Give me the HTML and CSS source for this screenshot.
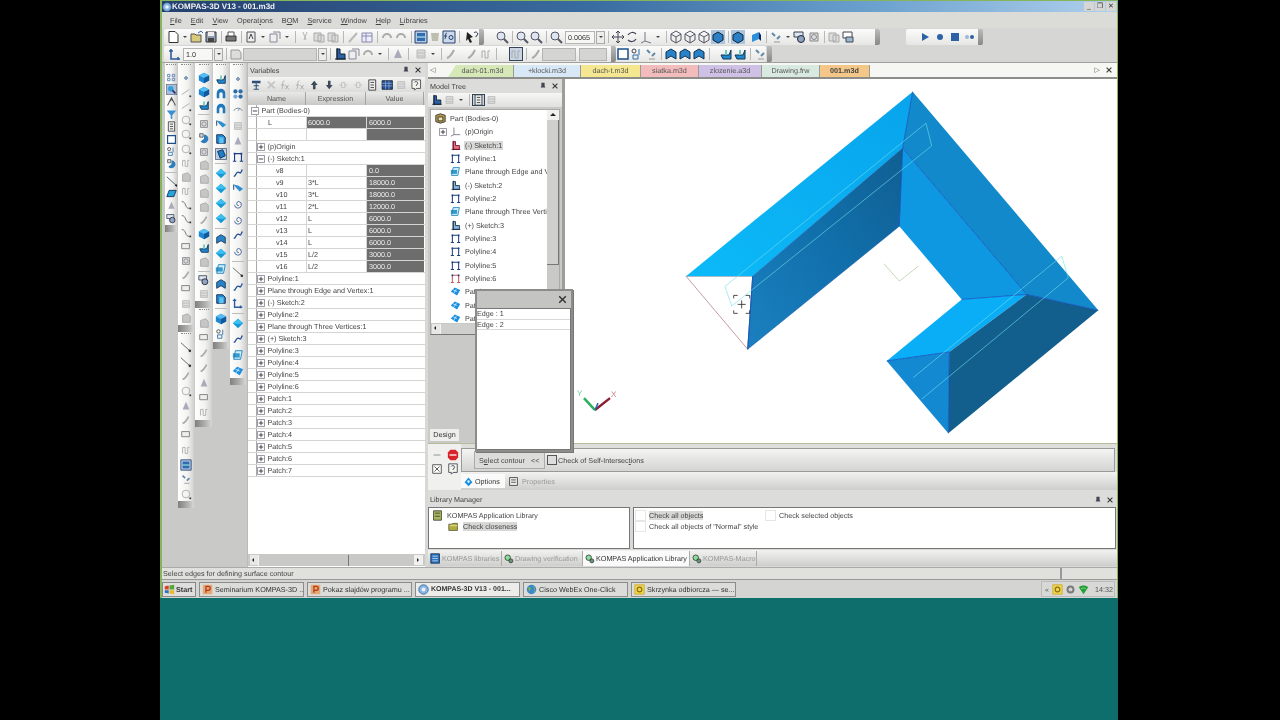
FILE: index.html
```html
<!DOCTYPE html>
<html lang="en">
<head>
<meta charset="utf-8">
<title>KOMPAS-3D V13 - 001.m3d</title>
<link rel="stylesheet" href="styles.css">
</head>
<body>
<svg class="defs" width="0" height="0">
<defs>
<symbol id="doc" viewBox="0 0 14 14"><path d="M3 1.500h6l3 3v8H3z" fill="#fff" stroke="#333"/></symbol>
<symbol id="open" viewBox="0 0 14 14"><path d="M1 4h4l1 1h5v7H1z" fill="#d9c97a" stroke="#555"/><path d="M8 3l3-2 2 2" fill="none" stroke="#2a64b0"/></symbol>
<symbol id="save" viewBox="0 0 14 14"><path d="M2 2h10v10H2z" fill="#8f9fb3" stroke="#333"/><path d="M4 2h6v4H4z" fill="#eee"/><path d="M4 8h6v4H4z" fill="#444"/></symbol>
<symbol id="print" viewBox="0 0 14 14"><path d="M2 6h10v5H2z" fill="#777" stroke="#333"/><path d="M4 2h6v4H4z" fill="#fff" stroke="#555"/></symbol>
<symbol id="page" viewBox="0 0 14 14"><path d="M3 2h8v10H3z" fill="#eee" stroke="#555"/><path d="M5 9l2-5 2 5" fill="none" stroke="#445"/></symbol>
<symbol id="gpage" viewBox="0 0 14 14"><path d="M2 4h7v8H2zM5 2h7v7" fill="#eee" stroke="#889"/></symbol>
<symbol id="scis" viewBox="0 0 14 14"><path d="M5 2l3 8M9 2l-3 8" stroke="#b5b5b5" fill="none"/></symbol>
<symbol id="gdoc" viewBox="0 0 14 14"><path d="M2 3h7v8H2zM6 5h6v7H6z" fill="#ddd" stroke="#aaa"/></symbol>
<symbol id="gbrush" viewBox="0 0 14 14"><path d="M3 12l8-9" stroke="#b8b8b8" stroke-width="2"/></symbol>
<symbol id="table" viewBox="0 0 14 14"><path d="M2 3h10v9H2z" fill="#eef" stroke="#88a"/><path d="M2 6h10M6 3v9" stroke="#88a"/></symbol>
<symbol id="gundo" viewBox="0 0 14 14"><path d="M3 8a4 4 0 0 1 8 0" fill="none" stroke="#aaa" stroke-width="2"/></symbol>
<symbol id="actA" viewBox="0 0 14 14"><path d="M1 1h12v12H1z" fill="#b7c9e2" stroke="#23406e"/><path d="M3 3h8v8H3z" fill="#2f6db3"/><path d="M3 7h8" stroke="#cfe"/></symbol>
<symbol id="shield" viewBox="0 0 14 14"><path d="M3 3h8l-1 8H4z" fill="#bdbdb0"/></symbol>
<symbol id="fx" viewBox="0 0 14 14"><path d="M1 1h12v12H1z" fill="#cdd8ea" stroke="#23406e"/><path d="M5 3c-2 0-1 3-2 6M2 6h3" fill="none" stroke="#23406e"/><circle cx="9" cy="7.500" r="2" fill="none" stroke="#23406e"/></symbol>
<symbol id="help" viewBox="0 0 14 14"><path d="M2 2l6 5-3 1 2 4-2 1-2-4-2 2z" fill="#222"/><path d="M9 3a2 2 0 1 1 2 3v1" fill="none" stroke="#234"/></symbol>
<symbol id="mag" viewBox="0 0 14 14"><circle cx="6" cy="6" r="4" fill="#dde6ee" stroke="#556"/><path d="M9 9l4 4" stroke="#556" stroke-width="2"/></symbol>
<symbol id="move" viewBox="0 0 14 14"><path d="M7 1v12M1 7h12M7 1L5 3M7 1l2 2M7 13l-2-2M7 13l2-2M1 7l2-2M1 7l2 2M13 7l-2-2M13 7l-2 2" fill="none" stroke="#445"/></symbol>
<symbol id="rot" viewBox="0 0 14 14"><path d="M3 5a5 5 0 0 1 8-1M11 9a5 5 0 0 1-8 1" fill="none" stroke="#445" stroke-width="1.200"/></symbol>
<symbol id="axis" viewBox="0 0 14 14"><path d="M6 2v9l6 2M6 11l-4 2" fill="none" stroke="#778"/></symbol>
<symbol id="wire" viewBox="0 0 14 14"><path d="M7 1l5 3v6l-5 3-5-3V4zM2 4l5 3 5-3M7 7v6" fill="none" stroke="#556"/></symbol>
<symbol id="cube" viewBox="0 0 14 14"><path d="M7 1l6 3v6l-6 3-6-3V4z" fill="#1f86d4"/><path d="M1 4l6 3 6-3-6-3z" fill="#55bdf2"/><path d="M7 7l6-3v6l-6 3z" fill="#11589c"/></symbol>
<symbol id="cubeA" viewBox="0 0 14 14"><path d="M0 0h14v14H0z" fill="#aac3df"/><path d="M7 2l5 3v5l-5 3-5-3V5z" fill="#2b7fc4" stroke="#123"/></symbol>
<symbol id="cubeB" viewBox="0 0 14 14"><path d="M3 5l7-3v7l-7 3z" fill="#2b8fdb"/><path d="M10 2l2 3v6l-2-2z" fill="#125"/></symbol>
<symbol id="tool" viewBox="0 0 14 14"><path d="M3 3l3 3M8 9l3-3" stroke="#68a" stroke-width="2"/><path d="M5 12h6" stroke="#999"/></symbol>
<symbol id="gcam" viewBox="0 0 14 14"><path d="M3 3h8v8H3z" fill="#ddd" stroke="#888"/><circle cx="7" cy="7" r="2.500" fill="none" stroke="#889"/></symbol>
<symbol id="dbox" viewBox="0 0 14 14"><path d="M2 2h9v6H2z" fill="#fff" stroke="#445"/><path d="M5 7h7v5H5z" fill="#9bc" stroke="#445"/></symbol>
<symbol id="play" viewBox="0 0 14 14"><path d="M4 3l7 4-7 4z" fill="#2d62a8"/></symbol>
<symbol id="stopc" viewBox="0 0 14 14"><circle cx="7" cy="7" r="3" fill="#2d62a8"/></symbol>
<symbol id="stops" viewBox="0 0 14 14"><path d="M3 3h8v8H3z" fill="#2d62a8"/></symbol>
<symbol id="dots" viewBox="0 0 14 14"><circle cx="4" cy="7" r="2" fill="#a0b6da"/><circle cx="9" cy="7" r="2" fill="#2d62a8"/></symbol>
<symbol id="frame" viewBox="0 0 14 14"><path d="M3 2v10h9M1 4h4M10 10v3" fill="none" stroke="#2d5c9e" stroke-width="1.600"/></symbol>
<symbol id="sketchb" viewBox="0 0 14 14"><path d="M4 2h3v5h5v5H4z" fill="#2d62a8" stroke="#123"/><path d="M2 12h11M4 13V1" stroke="#123"/></symbol>
<symbol id="gsk" viewBox="0 0 14 14"><path d="M2 3h8l2 3v6H2z" fill="#ddd" stroke="#999"/></symbol>
<symbol id="gq" viewBox="0 0 14 14"><path d="M3 11c3-1 5-4 7-8" fill="none" stroke="#aaa" stroke-width="2"/></symbol>
<symbol id="gl" viewBox="0 0 14 14"><path d="M2 10L11 4" stroke="#aaa"/><path d="M11 11h2v2h-2z" fill="#333"/></symbol>
<symbol id="gc" viewBox="0 0 14 14"><circle cx="7" cy="7" r="4.500" fill="none" stroke="#aaa"/><path d="M11 11h2v2h-2z" fill="#333"/></symbol>
<symbol id="dl" viewBox="0 0 14 14"><path d="M1 2l10 9" stroke="#555"/><circle cx="11.500" cy="11.500" r="1.500" fill="#333"/></symbol>
<symbol id="dcurve" viewBox="0 0 14 14"><path d="M2 3c6 0 3 8 9 8" fill="none" stroke="#666"/><path d="M11 10h2v2h-2z" fill="#333"/></symbol>
<symbol id="grect" viewBox="0 0 14 14"><path d="M2 3h9v6H2z" fill="#eee" stroke="#777"/></symbol>
<symbol id="gblk" viewBox="0 0 14 14"><path d="M3 4l6-2 3 3v7l-9 0z" fill="#c6c6c6" stroke="#aaa"/></symbol>
<symbol id="gcurl" viewBox="0 0 14 14"><path d="M3 11V4h3v7h3V4h2" fill="none" stroke="#aaa"/></symbol>
<symbol id="grid" viewBox="0 0 14 14"><path d="M2 3h3v3H2zM8 3h3v3H8zM2 8h3v3H2zM8 8h3v3H8z" fill="none" stroke="#4b77ad"/></symbol>
<symbol id="findA" viewBox="0 0 14 14"><path d="M0 0h14v14H0z" fill="#a8bfd8" stroke="#445"/><circle cx="6" cy="6" r="3.500" fill="#39a0e0"/><path d="M8 8l4 4" stroke="#226" stroke-width="2"/></symbol>
<symbol id="chev" viewBox="0 0 14 14"><path d="M2 12l5-10 5 10M4 8l3-4 3 4" fill="none" stroke="#555" stroke-width="1.300"/></symbol>
<symbol id="funnel" viewBox="0 0 14 14"><path d="M1 2h12L8 8v5L6 12V8z" fill="#3b8fd0"/></symbol>
<symbol id="pdoc" viewBox="0 0 14 14"><path d="M3 1h8v12H3z" fill="#eee" stroke="#333"/><path d="M5 4h4M5 7h4M5 10h4" stroke="#333"/></symbol>
<symbol id="fram" viewBox="0 0 14 14"><path d="M2 2h10v10H2z" fill="#fff" stroke="#1d4f8c" stroke-width="1.500"/></symbol>
<symbol id="gears" viewBox="0 0 14 14"><circle cx="4" cy="4" r="2" fill="none" stroke="#444"/><path d="M3 8h5v4H3zM9 2v6" fill="none" stroke="#2b6ea8"/></symbol>
<symbol id="pie" viewBox="0 0 14 14"><path d="M7 3a5 5 0 1 1-4 8l4-3z" fill="#2e7dbd"/><path d="M2 2h4v4H2z" fill="#cfd8e5" stroke="#555"/></symbol>
<symbol id="dline" viewBox="0 0 14 14"><path d="M1 1l11 10" stroke="#245"/><path d="M12 11l2 2" stroke="#111" stroke-width="2"/></symbol>
<symbol id="para" viewBox="0 0 14 14"><path d="M4 3h9l-3 8H1z" fill="#26a2dd" stroke="#124"/></symbol>
<symbol id="gtri" viewBox="0 0 14 14"><path d="M7 2l4 9H3z" fill="#aab"/></symbol>
<symbol id="mixg" viewBox="0 0 14 14"><path d="M1 2h9v5H1z" fill="#dfe6ef" stroke="#345"/><circle cx="8" cy="9" r="3.500" fill="#8ea4c2" stroke="#223"/></symbol>
<symbol id="dot" viewBox="0 0 14 14"><circle cx="7" cy="7" r="1.500" fill="none" stroke="#24507f"/></symbol>
<symbol id="dotg" viewBox="0 0 14 14"><circle cx="4" cy="4" r="2.500" fill="#2d6fa8"/><circle cx="10" cy="4" r="2.500" fill="#2d6fa8"/><circle cx="4" cy="10" r="2.500" fill="#7ba6d4"/><circle cx="10" cy="10" r="2.500" fill="#2d6fa8"/></symbol>
<symbol id="arc" viewBox="0 0 14 14"><path d="M2 8a5.500 5.500 0 0 1 10 0" fill="none" stroke="#6a7f96"/><path d="M7 8l2-3" stroke="#6a7f96"/></symbol>
<symbol id="gstack" viewBox="0 0 14 14"><path d="M3 3h8v8H3zM3 6h8M3 9h8" fill="#ddd" stroke="#bbb"/></symbol>
<symbol id="poly" viewBox="0 0 14 14"><path d="M3 12V3h8v9M1 12h4M9 12h4" fill="none" stroke="#1e3c82" stroke-width="1.300"/><path d="M2 2h2v2H2zM10 2h2v2h-2z" fill="#1e3c82"/></symbol>
<symbol id="polyr" viewBox="0 0 14 14"><path d="M3 12V3h8v9M1 12h4M9 12h4" fill="none" stroke="#c45a5a" stroke-width="1.300"/><path d="M2 2h2v2H2zM10 2h2v2h-2z" fill="#1e3c82"/></symbol>
<symbol id="zig" viewBox="0 0 14 14"><path d="M2 11c3 0 2-5 5-5s2 4 5-3" fill="none" stroke="#1e4c92" stroke-width="1.500"/></symbol>
<symbol id="blues" viewBox="0 0 14 14"><path d="M2 3l5 1 6 4-4 3-4-4z" fill="#2b8fd2"/><path d="M2 3v6" stroke="#124"/></symbol>
<symbol id="spir" viewBox="0 0 14 14"><path d="M3 8a4 4 0 1 0 5-4 2.500 2.500 0 1 0 0 5" fill="none" stroke="#3a5f95"/></symbol>
<symbol id="patch" viewBox="0 0 14 14"><path d="M7 1l6 5-6 6-6-6z" fill="#159ad8"/><path d="M7 1l6 5-6 1-6-1z" fill="#3dc0ef"/></symbol>
<symbol id="patchA" viewBox="0 0 14 14"><path d="M.500.500h13v13H.500z" fill="#bcd0e4" stroke="#567"/><path d="M3 4l6-2 3 7-6 3z" fill="#1c7fc9" stroke="#124"/></symbol>
<symbol id="shellA" viewBox="0 0 14 14"><path d="M2 2h7l3 3v7H2z" fill="#1f8ad3" stroke="#124"/><path d="M5 5h5v7H5z" fill="#5fc2f3"/></symbol>
<symbol id="arch" viewBox="0 0 14 14"><path d="M2 12V6a5 5 0 0 1 10 0v6H9V7a2 2 0 0 0-4 0v5z" fill="#1e78bb"/></symbol>
<symbol id="fold" viewBox="0 0 14 14"><path d="M2 12V5l5-3 5 3v7l-5-3z" fill="#2882c8" stroke="#135"/></symbol>
<symbol id="rev" viewBox="0 0 14 14"><path d="M2 8h8l2-5v9H4z" fill="#1e89cf" stroke="#135"/><path d="M6 3h2v5H6z" fill="#6cb"/></symbol>
<symbol id="plane" viewBox="0 0 14 14"><path d="M4 2h8l-2 10H2z" fill="#cfeeff" stroke="#137ab5"/><path d="M1 5h8v5H1z" fill="#0f85ba" opacity=".800"/></symbol>
<symbol id="sk-r" viewBox="0 0 14 14"><path d="M4 2h3v5h5v5H4z" fill="#e8707a" stroke="#602"/><path d="M2 12h11M4 13V1" stroke="#602"/></symbol>
<symbol id="sk-b" viewBox="0 0 14 14"><path d="M4 2h3v5h5v5H4z" fill="#7fb4e8" stroke="#123"/><path d="M2 12h11M4 13V1" stroke="#123"/></symbol>
<symbol id="tpatch" viewBox="0 0 14 14"><path d="M1 7l5-5 7 3-4 7z" fill="#1a8ee0"/><path d="M4 5l5 2M5 9l3-5" stroke="#cfeeff"/></symbol>
<symbol id="orig" viewBox="0 0 14 14"><path d="M5 2v9h8M5 11l-4 2" fill="none" stroke="#667"/></symbol>
<symbol id="part" viewBox="0 0 14 14"><path d="M1 3l6-2 6 2v8l-6 2-6-2z" fill="#b89d4a" stroke="#222"/><path d="M4 5h6v5H4z" fill="#e9e2b8" stroke="#222"/></symbol>
<symbol id="book" viewBox="0 0 14 14"><path d="M2 1h10v12H2z" fill="#a9b65c" stroke="#333"/><path d="M4 4h6M4 8h6" stroke="#333"/></symbol>
<symbol id="folder" viewBox="0 0 14 14"><path d="M1 4h4l1-1h6v9H1z" fill="#b2ad3a" stroke="#554"/><path d="M2 6h10" stroke="#ecea9e"/></symbol>
<symbol id="libb" viewBox="0 0 14 14"><path d="M1 1h11v12H1z" fill="#2a76c2" stroke="#124"/><path d="M3 4h7M3 7h7M3 10h7" stroke="#cde"/></symbol>
<symbol id="gearg" viewBox="0 0 14 14"><circle cx="6" cy="6" r="3.500" fill="#8d9" stroke="#333"/><circle cx="10" cy="10" r="2.500" fill="#697" stroke="#333"/></symbol>
<symbol id="props" viewBox="0 0 14 14"><path d="M2 2h10v10H2z" fill="#eee" stroke="#333"/><path d="M4 5h6M4 8h6" stroke="#333"/></symbol>
<symbol id="opt" viewBox="0 0 14 14"><path d="M2 8l5-6 5 6-5 5z" fill="#1c8fe0"/><circle cx="7" cy="7" r="1.500" fill="#dff"/></symbol>
<symbol id="stop" viewBox="0 0 14 14"><path d="M4 1h6l3 3v6l-3 3H4l-3-3V4z" fill="#d9232a"/><path d="M3 7h8" stroke="#fff" stroke-width="1.500"/></symbol>
<symbol id="zoomp" viewBox="0 0 14 14"><path d="M2 2h10v10H2z" fill="#fff" stroke="#444"/><path d="M4 4l6 6M10 4l-6 6" stroke="#444"/></symbol>
<symbol id="qm" viewBox="0 0 14 14"><path d="M2 1h10v10H7l-2 2v-2H2z" fill="#f4f4ea" stroke="#445"/><path d="M5 4a2 2 0 1 1 2 3v1" fill="none" stroke="#235"/></symbol>
<symbol id="ppt" viewBox="0 0 14 14"><path d="M1 1h12v12H1z" fill="#e4a877"/><path d="M5 11V3h3a2 2 0 0 1 0 5H5" fill="none" stroke="#b33a12" stroke-width="1.600"/></symbol>
<symbol id="globe" viewBox="0 0 14 14"><circle cx="7" cy="7" r="6" fill="#3d86d0"/><path d="M3 4c3-1 4 2 2 4s-2 3-1 4" fill="#7cbb3e"/><path d="M9 2c2 2 3 6 1 9" fill="none" stroke="#7cbb3e"/></symbol>
<symbol id="komp" viewBox="0 0 14 14"><circle cx="7" cy="7" r="6" fill="#8ab6e0" stroke="#2b5e96"/><circle cx="7" cy="7" r="2.500" fill="#eef"/></symbol>
<symbol id="mail" viewBox="0 0 14 14"><path d="M1 1h12v12H1z" fill="#f1d44c" stroke="#c6a92a"/><circle cx="7" cy="7" r="3" fill="none" stroke="#8b6f12" stroke-width="1.400"/></symbol>
<symbol id="win" viewBox="0 0 14 14"><path d="M1 3l5-1v5H1z" fill="#d9402a"/><path d="M7 2l6-1v6H7z" fill="#5aa53a"/><path d="M1 8h5v4l-5-1z" fill="#2d6fc4"/><path d="M7 8h6v5l-6-1z" fill="#e9b92c"/></symbol>
<symbol id="shieldt" viewBox="0 0 14 14"><circle cx="7" cy="7" r="5" fill="#7a7a7a"/><circle cx="7" cy="7" r="2.500" fill="#d0d0d0"/></symbol>
<symbol id="wifi" viewBox="0 0 14 14"><path d="M1 4c3-3 9-3 12 0l-6 9z" fill="#25a038"/><path d="M4 6c2-1 4-1 6 0" stroke="#9fe0a8" fill="none"/></symbol>
<symbol id="pin" viewBox="0 0 10 10"><path d="M3 1h4v4l1 2H2l1-2zM5 7v3" fill="#445"/></symbol>
<symbol id="cross" viewBox="0 0 10 10"><path d="M2 2l6 6M8 2l-6 6" stroke="#333" stroke-width="1.300"/></symbol>
<symbol id="plus" viewBox="0 0 9 9"><path d="M.500.500h8v8h-8z" fill="#fff" stroke="#889"/><path d="M2 4.500h5M4.500 2v5" stroke="#333"/></symbol>
<symbol id="minus" viewBox="0 0 9 9"><path d="M.500.500h8v8h-8z" fill="#fff" stroke="#889"/><path d="M2 4.500h5" stroke="#333"/></symbol>
<symbol id="tlines" viewBox="0 0 14 14"><path d="M2 2h10v3H2z" fill="#2c4f78"/><path d="M7 5v7M4 12h6M4 8h6" stroke="#2c4f78" stroke-width="1.200"/></symbol>
<symbol id="gx" viewBox="0 0 14 14"><path d="M3 3l8 8M11 3l-8 8" stroke="#c4c4c4" stroke-width="2"/></symbol>
<symbol id="gfx" viewBox="0 0 14 14"><path d="M6 2c-3 0-1 6-3 10M2 7h4M7 7l4 5M11 7l-4 5" fill="none" stroke="#aaa"/></symbol>
<symbol id="up" viewBox="0 0 14 14"><path d="M7 2l4 5H8.500v5h-3V7H3z" fill="#3e4a5c"/></symbol>
<symbol id="down" viewBox="0 0 14 14"><path d="M7 12l4-5H8.500V2h-3v5H3z" fill="#3e4a5c"/></symbol>
<symbol id="glink" viewBox="0 0 14 14"><path d="M2 7h4M8 7h4M5 4h4v6H5z" fill="none" stroke="#c0c0c0"/></symbol>
<symbol id="bluetable" viewBox="0 0 14 14"><path d="M1 2h12v10H1z" fill="#244f96" stroke="#123"/><path d="M1 5h12M1 8h12M5 2v10M9 2v10" stroke="#a9c0e4" stroke-width=".7"/></symbol>
</defs>
</svg>

<div class="stage">
<div class="window">

<header class="titlebar">
  <svg class="ic11"><use href="#komp"/></svg>
  <span class="title-text">KOMPAS-3D V13 - 001.m3d</span>
  <span class="caption-btns"><span class="cbtn">_</span><span class="cbtn">❐</span><span class="cbtn">✕</span></span>
</header>

<nav class="menubar">
  <span class="mi"><u>F</u>ile</span><span class="mi"><u>E</u>dit</span><span class="mi"><u>V</u>iew</span><span class="mi">Operat<u>i</u>ons</span><span class="mi">B<u>O</u>M</span><span class="mi"><u>S</u>ervice</span><span class="mi"><u>W</u>indow</span><span class="mi"><u>H</u>elp</span><span class="mi"><u>L</u>ibraries</span>
</nav>

<div class="tbrow tbrow1">
  <div class="tb tb-main">
    <svg class="ti"><use href="#doc"/></svg><i class="dd"></i><svg class="ti"><use href="#open"/></svg><svg class="ti"><use href="#save"/></svg><i class="sp"></i>
    <svg class="ti"><use href="#print"/></svg><i class="sp"></i><svg class="ti"><use href="#page"/></svg><i class="dd"></i><svg class="ti"><use href="#gpage"/></svg><i class="dd"></i><i class="sp"></i>
    <svg class="ti"><use href="#scis"/></svg><svg class="ti"><use href="#gdoc"/></svg><svg class="ti"><use href="#gdoc"/></svg><i class="sp"></i><svg class="ti"><use href="#gbrush"/></svg><svg class="ti"><use href="#table"/></svg><i class="sp"></i>
    <svg class="ti"><use href="#gundo"/></svg><svg class="ti"><use href="#gundo"/></svg><i class="sp"></i><svg class="ti"><use href="#actA"/></svg><svg class="ti"><use href="#shield"/></svg><svg class="ti"><use href="#fx"/></svg><i class="sp"></i><i class="gap3"></i><svg class="ti"><use href="#help"/></svg><i class="grip"></i><i class="gap11"></i>
    <svg class="ti"><use href="#mag"/></svg><i class="sp"></i><svg class="ti"><use href="#mag"/></svg><svg class="ti"><use href="#mag"/></svg><i class="sp"></i><svg class="ti"><use href="#mag"/></svg>
    <span class="input inp-zoom">0.0065</span><span class="combo-btn"></span><i class="sp"></i>
    <svg class="ti"><use href="#move"/></svg><svg class="ti"><use href="#rot"/></svg><svg class="ti"><use href="#axis"/></svg><i class="dd"></i><i class="sp"></i>
    <svg class="ti"><use href="#wire"/></svg><svg class="ti"><use href="#wire"/></svg><svg class="ti"><use href="#wire"/></svg><svg class="ti"><use href="#cubeA"/></svg><i class="sp"></i><svg class="ti"><use href="#cubeA"/></svg><svg class="ti tiw"><use href="#cubeB"/></svg><i class="sp"></i>
    <svg class="ti"><use href="#tool"/></svg><i class="dd"></i><svg class="ti"><use href="#mixg"/></svg><svg class="ti"><use href="#gcam"/></svg><i class="sp"></i><svg class="ti"><use href="#gdoc"/></svg><svg class="ti"><use href="#dbox"/></svg><i class="grip grip-end"></i>
  </div>
  <div class="tb tb-run">
    <svg class="ti"><use href="#play"/></svg><svg class="ti"><use href="#stopc"/></svg><svg class="ti"><use href="#stops"/></svg><svg class="ti"><use href="#dots"/></svg><i class="grip grip-end"></i>
  </div>
</div>

<div class="tbrow tbrow2">
  <div class="tb tb-sec">
    <svg class="ti"><use href="#frame"/></svg><span class="input inp-one">1.0</span><span class="combo-btn"></span><i class="sp"></i><svg class="ti"><use href="#gsk"/></svg><span class="input inp-long"></span><span class="combo-btn"></span><i class="sp"></i>
    <svg class="ti"><use href="#sketchb"/></svg><svg class="ti"><use href="#gpage"/></svg><svg class="ti"><use href="#gundo"/></svg><i class="dd"></i><i class="sp"></i><svg class="ti"><use href="#gtri"/></svg><i class="sp"></i><i class="gap3"></i><svg class="ti"><use href="#gstack"/></svg><i class="dd"></i><i class="sp"></i><svg class="ti"><use href="#gq"/></svg><i class="gap7"></i><svg class="ti"><use href="#gq"/></svg><svg class="ti"><use href="#gcurl"/></svg><i class="sp"></i><i class="gap10"></i><svg class="ti ti-act"><use href="#gcurl"/></svg><i class="sp"></i><svg class="ti"><use href="#gq"/></svg>
    <span class="input inp-a"></span><span class="input inp-b"></span><i class="grip"></i>
    <svg class="ti"><use href="#fram"/></svg><svg class="ti"><use href="#gears"/></svg><svg class="ti"><use href="#tool"/></svg><i class="sp"></i><svg class="ti"><use href="#fold"/></svg><svg class="ti"><use href="#fold"/></svg><svg class="ti"><use href="#fold"/></svg><i class="sp"></i><i class="gap7"></i><svg class="ti"><use href="#rev"/></svg><svg class="ti"><use href="#rev"/></svg><i class="sp"></i><svg class="ti"><use href="#tool"/></svg><i class="grip grip-end"></i>
  </div>
</div>

<div class="main">

<aside class="dock">
  <div class="col col1">
    <div class="strip">
      <i class="gripdots"></i>
      <svg class="si"><use href="#grid"/></svg><svg class="si"><use href="#findA"/></svg><svg class="si"><use href="#chev"/></svg><svg class="si"><use href="#funnel"/></svg><svg class="si"><use href="#pdoc"/></svg><svg class="si"><use href="#fram"/></svg><svg class="si"><use href="#gears"/></svg><svg class="si"><use href="#pie"/></svg><i class="hsep"></i><svg class="si"><use href="#dline"/></svg><svg class="si"><use href="#para"/></svg><svg class="si"><use href="#gtri"/></svg><svg class="si"><use href="#mixg"/></svg>
    </div>
    <i class="handle"></i>
  </div>
  <div class="col col2">
    <div class="strip">
      <i class="gripdots"></i>
      <svg class="si"><use href="#dot"/></svg><svg class="si"><use href="#gl"/></svg><svg class="si"><use href="#gl"/></svg><svg class="si"><use href="#gc"/></svg><svg class="si"><use href="#gc"/></svg><svg class="si"><use href="#gc"/></svg><svg class="si"><use href="#gcurl"/></svg><svg class="si"><use href="#gblk"/></svg><svg class="si"><use href="#gcurl"/></svg><svg class="si"><use href="#dcurve"/></svg><svg class="si"><use href="#dcurve"/></svg><svg class="si"><use href="#dcurve"/></svg><svg class="si"><use href="#grect"/></svg><svg class="si"><use href="#gcam"/></svg><svg class="si"><use href="#gq"/></svg><svg class="si"><use href="#grect"/></svg><svg class="si"><use href="#gstack"/></svg><svg class="si"><use href="#gblk"/></svg>
    </div>
    <i class="handle"></i>
    <div class="strip strip-b">
      <i class="gripdots"></i>
      <svg class="si"><use href="#dl"/></svg><svg class="si"><use href="#dl"/></svg><svg class="si"><use href="#gq"/></svg><svg class="si"><use href="#gc"/></svg><svg class="si"><use href="#gtri"/></svg><svg class="si"><use href="#gq"/></svg><svg class="si"><use href="#grect"/></svg><svg class="si"><use href="#gcurl"/></svg><svg class="si"><use href="#actA"/></svg><svg class="si"><use href="#tool"/></svg><svg class="si"><use href="#gc"/></svg>
    </div>
    <i class="handle"></i>
  </div>
  <div class="col col3">
    <div class="strip">
      <i class="gripdots"></i>
      <svg class="si"><use href="#cube"/></svg><svg class="si"><use href="#cube"/></svg><svg class="si"><use href="#rev"/></svg><i class="hsep"></i><svg class="si"><use href="#gcam"/></svg><svg class="si"><use href="#pie"/></svg><svg class="si"><use href="#gcam"/></svg><svg class="si"><use href="#gblk"/></svg><svg class="si"><use href="#gblk"/></svg><svg class="si"><use href="#gblk"/></svg><svg class="si"><use href="#gblk"/></svg><svg class="si"><use href="#gq"/></svg><svg class="si"><use href="#cube"/></svg><svg class="si"><use href="#rev"/></svg><svg class="si"><use href="#gblk"/></svg><i class="hsep"></i><svg class="si"><use href="#mixg"/></svg><svg class="si"><use href="#gstack"/></svg>
    </div>
    <i class="handle"></i>
    <div class="strip strip-b">
      <i class="gripdots"></i>
      <svg class="si"><use href="#gblk"/></svg><svg class="si"><use href="#grect"/></svg><svg class="si"><use href="#gq"/></svg><svg class="si"><use href="#gq"/></svg><svg class="si"><use href="#gtri"/></svg><svg class="si"><use href="#grect"/></svg><svg class="si"><use href="#gcurl"/></svg>
    </div>
    <i class="handle"></i>
  </div>
  <div class="col col4">
    <div class="strip">
      <i class="gripdots"></i>
      <svg class="si"><use href="#rev"/></svg><svg class="si"><use href="#arch"/></svg><svg class="si"><use href="#arch"/></svg><svg class="si"><use href="#blues"/></svg><svg class="si"><use href="#shellA"/></svg><svg class="si"><use href="#patchA"/></svg><i class="hsep"></i><svg class="si"><use href="#patch"/></svg><svg class="si"><use href="#patch"/></svg><svg class="si"><use href="#patch"/></svg><svg class="si"><use href="#patch"/></svg><i class="hsep"></i><svg class="si"><use href="#fold"/></svg><svg class="si"><use href="#patch"/></svg><svg class="si"><use href="#plane"/></svg><svg class="si"><use href="#fold"/></svg><svg class="si"><use href="#shellA"/></svg><i class="hsep"></i><svg class="si"><use href="#cube"/></svg><svg class="si"><use href="#gears"/></svg>
    </div>
    <i class="handle"></i>
  </div>
  <div class="col col5">
    <div class="strip">
      <i class="gripdots"></i>
      <svg class="si"><use href="#dot"/></svg><svg class="si"><use href="#dotg"/></svg><svg class="si"><use href="#arc"/></svg><svg class="si"><use href="#gstack"/></svg><svg class="si"><use href="#gtri"/></svg><svg class="si"><use href="#poly"/></svg><svg class="si"><use href="#zig"/></svg><svg class="si"><use href="#blues"/></svg><svg class="si"><use href="#spir"/></svg><svg class="si"><use href="#spir"/></svg><svg class="si"><use href="#zig"/></svg><svg class="si"><use href="#spir"/></svg><i class="hsep"></i><svg class="si"><use href="#dl"/></svg><svg class="si"><use href="#zig"/></svg><svg class="si"><use href="#frame"/></svg><i class="hsep"></i><svg class="si"><use href="#patch"/></svg><svg class="si"><use href="#zig"/></svg><svg class="si"><use href="#plane"/></svg><svg class="si"><use href="#tpatch"/></svg>
    </div>
    <i class="handle"></i>
  </div>
</aside>

<section class="vars">
  <div class="panel-title"><span>Variables</span><span class="pt-btns"><svg class="pb"><use href="#pin"/></svg><svg class="pb"><use href="#cross"/></svg></span></div>
  <div class="vtools">
    <svg class="ti"><use href="#tlines"/></svg><svg class="ti"><use href="#gx"/></svg><svg class="ti"><use href="#gfx"/></svg><svg class="ti"><use href="#gfx"/></svg><svg class="ti"><use href="#up"/></svg><svg class="ti"><use href="#down"/></svg><svg class="ti"><use href="#glink"/></svg><svg class="ti"><use href="#glink"/></svg><svg class="ti"><use href="#pdoc"/></svg><svg class="ti"><use href="#bluetable"/></svg><svg class="ti"><use href="#gstack"/></svg><svg class="ti"><use href="#qm"/></svg>
  </div>
  <div class="vhead"><span>Name</span><span>Expression</span><span>Value</span></div>
  <div class="vbody">
    <div class="vr"><span class="vn l0"><svg class="ex"><use href="#minus"/></svg>Part (Bodies-0)</span></div>
    <div class="vr"><span class="vn var1">L</span><span class="ve dark">6000.0</span><span class="vv dark">6000.0</span></div>
    <div class="vr"><span class="vn"></span><span class="ve"></span><span class="vv dark"></span></div>
    <div class="vr"><span class="vn l1"><svg class="ex"><use href="#plus"/></svg>(p)Origin</span></div>
    <div class="vr"><span class="vn l1"><svg class="ex"><use href="#minus"/></svg>(-) Sketch:1</span></div>
    <div class="vr"><span class="vn var2">v8</span><span class="ve"></span><span class="vv dark">0.0</span></div>
    <div class="vr"><span class="vn var2">v9</span><span class="ve">3*L</span><span class="vv dark">18000.0</span></div>
    <div class="vr"><span class="vn var2">v10</span><span class="ve">3*L</span><span class="vv dark">18000.0</span></div>
    <div class="vr"><span class="vn var2">v11</span><span class="ve">2*L</span><span class="vv dark">12000.0</span></div>
    <div class="vr"><span class="vn var2">v12</span><span class="ve">L</span><span class="vv dark">6000.0</span></div>
    <div class="vr"><span class="vn var2">v13</span><span class="ve">L</span><span class="vv dark">6000.0</span></div>
    <div class="vr"><span class="vn var2">v14</span><span class="ve">L</span><span class="vv dark">6000.0</span></div>
    <div class="vr"><span class="vn var2">v15</span><span class="ve">L/2</span><span class="vv dark">3000.0</span></div>
    <div class="vr"><span class="vn var2">v16</span><span class="ve">L/2</span><span class="vv dark">3000.0</span></div>
    <div class="vr"><span class="vn l1"><svg class="ex"><use href="#plus"/></svg>Polyline:1</span></div>
    <div class="vr"><span class="vn l1 wide"><svg class="ex"><use href="#plus"/></svg>Plane through Edge and Vertex:1</span></div>
    <div class="vr"><span class="vn l1"><svg class="ex"><use href="#plus"/></svg>(-) Sketch:2</span></div>
    <div class="vr"><span class="vn l1"><svg class="ex"><use href="#plus"/></svg>Polyline:2</span></div>
    <div class="vr"><span class="vn l1 wide"><svg class="ex"><use href="#plus"/></svg>Plane through Three Vertices:1</span></div>
    <div class="vr"><span class="vn l1"><svg class="ex"><use href="#plus"/></svg>(+) Sketch:3</span></div>
    <div class="vr"><span class="vn l1"><svg class="ex"><use href="#plus"/></svg>Polyline:3</span></div>
    <div class="vr"><span class="vn l1"><svg class="ex"><use href="#plus"/></svg>Polyline:4</span></div>
    <div class="vr"><span class="vn l1"><svg class="ex"><use href="#plus"/></svg>Polyline:5</span></div>
    <div class="vr"><span class="vn l1"><svg class="ex"><use href="#plus"/></svg>Polyline:6</span></div>
    <div class="vr"><span class="vn l1"><svg class="ex"><use href="#plus"/></svg>Patch:1</span></div>
    <div class="vr"><span class="vn l1"><svg class="ex"><use href="#plus"/></svg>Patch:2</span></div>
    <div class="vr"><span class="vn l1"><svg class="ex"><use href="#plus"/></svg>Patch:3</span></div>
    <div class="vr"><span class="vn l1"><svg class="ex"><use href="#plus"/></svg>Patch:4</span></div>
    <div class="vr"><span class="vn l1"><svg class="ex"><use href="#plus"/></svg>Patch:5</span></div>
    <div class="vr"><span class="vn l1"><svg class="ex"><use href="#plus"/></svg>Patch:6</span></div>
    <div class="vr"><span class="vn l1"><svg class="ex"><use href="#plus"/></svg>Patch:7</span></div>
  </div>
  <div class="hscroll"><span class="arrow-l"></span><span class="thumb"></span><span class="arrow-r"></span></div>
</section>

<section class="right">
  <div class="doctabs">
    <span class="tab-nav">◁</span>
    <span class="dtab t1">dach-01.m3d</span><span class="dtab t2">+klocki.m3d</span><span class="dtab t3">dach-t.m3d</span><span class="dtab t4">siatka.m3d</span><span class="dtab t5">zlozenie.a3d</span><span class="dtab t6">Drawing.frw</span><span class="dtab t7">001.m3d</span>
    <span class="tab-end"><span class="tab-arrow">▷</span><svg class="pb"><use href="#cross"/></svg></span>
  </div>
  <div class="upper">
    <div class="tree-panel">
      <div class="panel-title pt-tree"><span>Model Tree</span><span class="pt-btns"><svg class="pb"><use href="#pin"/></svg><svg class="pb"><use href="#cross"/></svg></span></div>
      <div class="ttools"><svg class="ti"><use href="#sketchb"/></svg><svg class="ti"><use href="#gstack"/></svg><i class="dd"></i><i class="sp"></i><svg class="ti ti-act"><use href="#pdoc"/></svg><svg class="ti"><use href="#gstack"/></svg></div>
      <div class="tree-box">
        <div class="tree-main">
          <div class="tree-list">
            <div class="tr tr0"><svg class="tic"><use href="#part"/></svg><span>Part (Bodies-0)</span></div>
            <div class="tr"><svg class="ex exa"><use href="#plus"/></svg><svg class="tic"><use href="#orig"/></svg><span>(p)Origin</span></div>
            <div class="tr"><svg class="tic"><use href="#sk-r"/></svg><span class="sel">(-) Sketch:1</span></div>
            <div class="tr"><svg class="tic"><use href="#poly"/></svg><span>Polyline:1</span></div>
            <div class="tr"><svg class="tic"><use href="#plane"/></svg><span>Plane through Edge and Vertex:1</span></div>
            <div class="tr"><svg class="tic"><use href="#sk-b"/></svg><span>(-) Sketch:2</span></div>
            <div class="tr"><svg class="tic"><use href="#poly"/></svg><span>Polyline:2</span></div>
            <div class="tr"><svg class="tic"><use href="#plane"/></svg><span>Plane through Three Vertices:1</span></div>
            <div class="tr"><svg class="tic"><use href="#sk-b"/></svg><span>(+) Sketch:3</span></div>
            <div class="tr"><svg class="tic"><use href="#poly"/></svg><span>Polyline:3</span></div>
            <div class="tr"><svg class="tic"><use href="#poly"/></svg><span>Polyline:4</span></div>
            <div class="tr"><svg class="tic"><use href="#poly"/></svg><span>Polyline:5</span></div>
            <div class="tr"><svg class="tic"><use href="#polyr"/></svg><span>Polyline:6</span></div>
            <div class="tr"><svg class="tic"><use href="#tpatch"/></svg><span>Patch:1</span></div>
            <div class="tr"><svg class="tic"><use href="#tpatch"/></svg><span>Patch:2</span></div>
            <div class="tr"><svg class="tic"><use href="#tpatch"/></svg><span>Patch:3</span></div>
          </div>
          <div class="vscroll"><span class="va"></span><span class="vthumb"></span></div>
        </div>
        <div class="tree-hs"><span class="arrow-l"></span><span class="ths-thumb"></span></div>
      </div>
      <div class="tree-rest"></div>
      <div class="tree-tabs"><span class="design-tab">Design</span></div>
    </div>
    <div class="viewport">
      <svg class="model" viewBox="565 79 552 365" preserveAspectRatio="none">
        <defs>
          <linearGradient id="gTop" x1="0" y1="1" x2="1" y2="0"><stop offset="0" stop-color="#0cbaf8"/><stop offset="1" stop-color="#08a4ec"/></linearGradient>
          <linearGradient id="gIn" x1="0" y1="1" x2="1" y2="0"><stop offset="0" stop-color="#1b80c0"/><stop offset=".5" stop-color="#1170ac"/><stop offset="1" stop-color="#105f92"/></linearGradient>
        </defs>
        <path d="M686 276.700L752.700 276.700L747.700 350Z" fill="#fff" stroke="#a8707c" stroke-width=".7"/>
        <path d="M912.700 91.700L686 276.700L752.700 276.700L902.700 148.300Z" fill="url(#gTop)"/>
        <path d="M752.700 276.700L902.700 148.300L899.300 226.700L747.700 350Z" fill="url(#gIn)" stroke="#1058b0" stroke-width=".5"/>
        <path d="M912.700 91.700L1098.300 311L1026.700 295L902.700 148.300Z" fill="#1189ca"/>
        <path d="M902.700 148.300L1026.700 295L961.700 300L899.300 226.700Z" fill="#0f98e2"/>
        <path d="M961.700 300L1026.700 295L949.300 352.700L886.700 361.700Z" fill="#0aaef6"/>
        <path d="M1026.700 295L1098.300 311L948.300 434.300L949.300 352.700Z" fill="#125e8c"/>
        <path d="M886.700 361.700L949.300 352.700L948.300 434.300Z" fill="#1389d2"/>
        <path d="M902.700 148.300L1026.700 295L961.700 300M1026.700 295L1098.300 311M886.700 361.700L949.300 352.700L948.300 434.300M902.700 148.300L912.700 91.700M902.700 148.300L899.300 226.700M752.700 276.700L747.700 350" fill="none" stroke="#0f4fc0" stroke-width=".8"/>
        <path d="M725 287L926 123.300L931.700 146L731.700 306.700ZM913.300 378.300L1061.700 256.700L1068.300 278.300L921.700 400" fill="none" stroke="#6fe0ec" stroke-width=".6"/>
        <path d="M884 264.300L899.300 281.700L918.300 266.700" fill="none" stroke="#c6dab4"/>
        <path d="M733.700 299v-3h4M745.700 296h4v3M733.700 311v3h4M745.700 314h4v-3M741.700 301v8M737.700 305h8" fill="none" stroke="#222" stroke-width=".8"/>
        <path d="M595 411L610 399" stroke-width="2.500" fill="none" stroke="#8c1d33"/>
        <path d="M595 411L584 399" stroke-width="2.500" stroke="#2cb05c"/>
        <path d="M595 411L598 404" stroke-width="1.500" stroke="#2468b8"/>
        <text class="axt axy" x="577" y="397">Y</text>
        <text class="axt axx" x="611" y="398">X</text>
      </svg>
    </div>
    <div class="edge-dialog">
      <div class="ed-title"><svg class="ed-x"><use href="#cross"/></svg></div>
      <div class="ed-list"><div class="ed-row">Edge : 1</div><div class="ed-row">Edge : 2</div></div>
    </div>
  </div>

  <div class="pm">
    <div class="pm-left"><svg class="pi pi-dash" viewBox="0 0 14 14"><path d="M3 7h8" stroke="#bbb" stroke-width="2"/></svg><svg class="pi"><use href="#stop"/></svg><svg class="pi"><use href="#zoomp"/></svg><svg class="pi"><use href="#qm"/></svg></div>
    <div class="pm-right">
      <div class="pm-field"><span class="pm-btn">S<u>e</u>lect contour&nbsp;&nbsp;&nbsp;&lt;&lt;</span><span class="checkbox"></span><span class="pm-check">Check of Self-Intersec<u>t</u>ions</span></div>
      <div class="pm-tabs"><span class="ptab act"><svg class="tic"><use href="#opt"/></svg>Options</span><span class="ptab dim"><svg class="tic"><use href="#props"/></svg>Properties</span></div>
    </div>
  </div>

  <div class="lib">
    <div class="panel-title pt-lib"><span>Library Manager</span><span class="pt-btns"><svg class="pb"><use href="#pin"/></svg><svg class="pb"><use href="#cross"/></svg></span></div>
    <div class="lib-boxes">
      <div class="lib-tree">
        <div class="lt"><svg class="tic"><use href="#book"/></svg>KOMPAS Application Library</div>
        <div class="lt lt2"><svg class="tic"><use href="#folder"/></svg><span class="sel">Check closeness</span></div>
      </div>
      <div class="lib-list">
        <div class="ll-col"><div class="ll"><span class="sq"></span><span class="sel">Check all objects</span></div><div class="ll"><span class="sq"></span>Check all objects of "Normal" style</div></div>
        <div class="ll-col"><div class="ll"><span class="sq"></span>Check selected objects</div></div>
      </div>
    </div>
    <div class="lib-tabs">
      <span class="ltab l-a dim"><svg class="tic"><use href="#libb"/></svg>KOMPAS libraries</span><span class="ltab l-b dim"><svg class="tic"><use href="#gearg"/></svg>Drawing verification</span><span class="ltab l-c act"><svg class="tic"><use href="#gearg"/></svg>KOMPAS Application Library</span><span class="ltab l-d dim"><svg class="tic"><use href="#gearg"/></svg>KOMPAS-Macro</span>
    </div>
  </div>
</section>
</div>

<div class="status"><span class="st-text">Select edges for defining surface contour</span><span class="st-cell"></span></div>

<footer class="taskbar">
  <span class="start"><svg class="tic"><use href="#win"/></svg>Start</span>
  <span class="task"><svg class="tic"><use href="#ppt"/></svg>Seminarium KOMPAS-3D ...</span>
  <span class="task"><svg class="tic"><use href="#ppt"/></svg>Pokaz slajdów programu ...</span>
  <span class="task task-act"><svg class="tic"><use href="#komp"/></svg>KOMPAS-3D V13 - 001...</span>
  <span class="task"><svg class="tic"><use href="#globe"/></svg>Cisco WebEx One-Click</span>
  <span class="task"><svg class="tic"><use href="#mail"/></svg>Skrzynka odbiorcza — se...</span>
  <span class="tray"><span class="tray-l">«</span><svg class="tic"><use href="#mail"/></svg><svg class="tic"><use href="#shieldt"/></svg><svg class="tic"><use href="#wifi"/></svg><span class="clock">14:32</span></span>
</footer>

</div>
</div>
</body>
</html>
```
FILE: styles.css
```css
* { box-sizing: border-box; }
html, body { margin: 0; height: 720px; overflow: hidden; }
body {
  background: #000;
  font-family: "Liberation Sans", Arial, sans-serif;
  font-size: 7.200px;
  color: #333;
  text-rendering: geometricPrecision;
}
.defs { position: absolute; }
.stage { margin-left: 160px; width: 958px; height: 720px; background: #0d6e6c; }
.window {
  height: 598px;
  display: flex;
  flex-direction: column;
  background: #d2d2d0;
  border-left: 2px solid #86b55c;
  border-right: 1px solid #86b55c;
  border-top: 1px solid #86b55c;
  filter: blur(.45px);
}
i { display: block; flex: none; }

/* Title */
.titlebar {
  height: 11px;
  flex: none;
  display: flex;
  align-items: center;
  background: linear-gradient(90deg, #24406e 0%, #3a6ca0 45%, #6da2cf 75%, #b0d0ec 100%);
  color: #f2f2f2;
}
.ic11 { width: 10px; height: 10px; }
.title-text { font-weight: 700; font-size: 8px; }
.caption-btns { margin-left: auto; display: flex; gap: 1px; padding-right: 1px; }
.cbtn {
  width: 10px; height: 9px; background: #d6d6d4; color: #333;
  font-size: 7px; line-height: 9px; text-align: center;
}

/* Menu */
.menubar {
  height: 16px; flex: none;
  display: flex; align-items: center;
  padding-left: 8px; gap: 9px;
  background: #dbdbd8;
  color: #444;
  font-size: 7.300px;
}

/* Toolbars */
.tbrow { flex: none; display: flex; background: #d6d6d4; padding-left: 2px; }
.tbrow1 { height: 18px; align-items: center; }
.tbrow2 { height: 17px; align-items: center; border-bottom: 1px solid #a0a09c; }
.tb {
  height: 16px; display: flex; align-items: center;
  background: linear-gradient(#fbfbfb, #e6e6e4);
  border-radius: 2px;
}
.tb-main { width: 716px; padding-left: 2px; flex: none; }
.tb-run { width: 74px; margin-left: 26px; padding-left: 12px; gap: 1px; flex: none; }
.tb-sec { width: 602px; padding-left: 4px; flex: none; }
.ti { width: 14px; height: 14px; flex: none; }
.tiw { margin-left: 4px; }
.ti-act { background: #c8d4e4; outline: 1px solid #345; outline-offset: -1px; }
.sp { width: 1px; height: 12px; background: #b8b8b6; margin: 0 2.500px; }
.dd {
  width: 4px; height: 2px; margin: 0 3px;
  border-left: 2px solid transparent; border-right: 2px solid transparent; border-top: 2px solid #444;
}
.grip { width: 5px; height: 16px; background: linear-gradient(#bbb, #888); border-radius: 0 2px 2px 0; }
.grip-end { margin-left: auto; }
.gap11 { width: 11px; }
.gap10 { width: 10px; }
.gap7 { width: 7px; }
.gap3 { width: 3px; }
.input {
  display: block; flex: none; height: 13px; background: #f7f7f5; border: 1px solid #b4b4b2;
  font-size: 7.200px; line-height: 11px; padding-left: 2px;
}
.inp-zoom { width: 30px; margin-left: 2px; }
.inp-one { width: 30px; margin-left: 1px; }
.inp-long { width: 74px; background: #d4d4d2; }
.inp-a { width: 34px; background: #d4d4d2; margin-left: -1px; }
.inp-b { width: 28px; background: #d4d4d2; margin: 0 4px 0 3px; }
.combo-btn { width: 9px; height: 13px; background: #ececea; border: 1px solid #aaa; flex: none; margin-left: 1px; position: relative; }
.combo-btn::after {
  content: ""; position: absolute; left: 1.500px; top: 4px;
  border-left: 2px solid transparent; border-right: 2px solid transparent; border-top: 2px solid #444;
}

/* Main */
.main { flex: 1; min-height: 0; display: flex; }

/* Left dock */
.dock { width: 85px; flex: none; display: flex; background: #c9c9c7; padding-left: 3px; gap: 1px; align-items: flex-start; }
.col { display: flex; flex-direction: column; align-items: stretch; }
.col1 { width: 12px; }
.col2 { width: 16px; --m: 1.050px; }
.col3 { width: 17px; --m: .875px; }
.col4 { width: 16px; --m: 1.530px; }
.col5 { width: 16px; --m: 1.840px; }
.col2 .strip-b { --m: 1.350px; }
.col3 .strip-b { --m: 1.430px; }
.strip {
  display: flex; flex-direction: column; align-items: center;
  background: linear-gradient(90deg, #ffffff, #f2f2f0 60%, #d0d0ce);
}
.si { width: 12px; height: 12px; flex: none; margin: var(--m) 0; display: block; }
.col1 .si { width: 11px; height: 11px; margin: .700px 0; }
.gripdots { width: 10px; height: 4px; margin: 1px 0 3px; border-top: 1px dotted #888; }
.hsep { width: 12px; height: 1px; background: #bdbdbb; margin: 2px 0; }
.handle { height: 7px; background: linear-gradient(90deg, #808080, #b0b0ae 60%, #d8d8d6); }

/* Panel title */
.panel-title {
  height: 14px; flex: none; display: flex; align-items: center; justify-content: space-between;
  padding: 0 3px 0 2px; color: #444; background: #dcdcda;
}
.pt-btns { display: flex; gap: 4px; }
.pb { width: 8px; height: 8px; flex: none; }

/* Variables */
.vars { width: 178px; flex: none; display: flex; flex-direction: column; background: #fff; border-left: 1px solid #bbb; }
.vtools { height: 15px; flex: none; display: flex; align-items: center; padding-left: 1px; background: linear-gradient(#f4f4f2, #dcdcda); }
.vtools .ti { width: 14.500px; height: 12px; }
.vhead { height: 13px; flex: none; display: grid; grid-template-columns: 58px 60px 58px; background: linear-gradient(#e8e8e6, #c8c8c6); text-align: center; line-height: 13px; color: #555; }
.vhead span { border-right: 1px solid #a4a4a2; }
.vbody { flex: 1; min-height: 0; }
.vr {
  height: 12px; display: grid; grid-template-columns: 58px 60px 58px;
  border-bottom: 1px solid #d5d5d3; line-height: 11px; color: #444;
  background-image: linear-gradient(90deg, #aaa 0 1px, transparent 1px);
  background-size: 1px 100%; background-position: 8px 0; background-repeat: no-repeat;
}
.vn { display: flex; align-items: center; white-space: nowrap; }
.wide { overflow: visible; }
.l0 { padding-left: 3px; }
.l1 { padding-left: 9px; }
.ex { width: 8px; height: 8px; flex: none; margin-right: 2.500px; }
.var1 { padding-left: 20px; }
.var2 { padding-left: 28px; }
.ve { padding-left: 1px; border-left: 1px solid #d5d5d3; }
.vv { padding-left: 2px; border-left: 1px solid #d5d5d3; }
.dark { background: #6d6d6d; color: #eee; }
.hscroll { height: 12px; flex: none; display: flex; align-items: center; margin-bottom: 1px; background: #c9c9c7; padding-left: 2px; }
.arrow-l { width: 8px; height: 10px; background: #e8e8e6; flex: none; position: relative; }
.arrow-l::after { content: ""; position: absolute; left: 2px; top: 2.500px; border: 2.500px solid transparent; border-right-color: #222; border-left-width: 0; }
.thumb { width: 91px; height: 11px; background: #c9c9c7; border-left: 1px solid #f4f4f2; border-right: 1px solid #777; flex: none; }
.arrow-r { width: 9px; height: 10px; background: #f0f0ee; margin-left: auto; margin-right: 2px; position: relative; flex: none; }
.arrow-r::after { content: ""; position: absolute; left: 3px; top: 2.500px; border: 2.500px solid transparent; border-left-color: #222; border-right-width: 0; }

/* Right */
.right { flex: 1; min-width: 0; display: flex; flex-direction: column; padding-left: 3px; background: #d8d8d6; }
.doctabs { height: 16px; flex: none; display: flex; align-items: flex-end; background: #f6f6f2; border-bottom: 2px solid #8d8d8a; color: #555; }
.tab-nav { width: 24px; align-self: center; font-size: 7px; padding-left: 2px; }
.dtab { height: 12px; line-height: 12px; text-align: center; border-right: 1px solid #9a9a96; flex: none; }
.t1 { width: 66px; background: #d6e8b8; clip-path: polygon(8px 0, 100% 0, 100% 100%, 0 100%); padding-left: 4px; margin-left: -4px; }
.t2 { width: 67px; background: #d8e8f6; }
.t3 { width: 60px; background: #f4e78f; }
.t4 { width: 58px; background: #f3bcbc; }
.t5 { width: 63px; background: #cfc0e6; }
.t6 { width: 58px; background: #d8eadf; }
.t7 { width: 50px; background: #f4c688; font-weight: 700; color: #444; }
.tab-end { margin-left: auto; align-self: center; display: flex; align-items: center; gap: 5px; padding-right: 4px; }
.tab-arrow { font-size: 7px; }

.upper { height: 365px; flex: none; display: flex; position: relative; background: #fff; border-bottom: 1px solid #b9b99c; }
.tree-panel { width: 137px; flex: none; display: flex; flex-direction: column; background: #c9c9c7; border-right: 3px solid #9d9d9a; }
.ttools { height: 14px; flex: none; display: flex; align-items: center; padding-left: 2px; background: linear-gradient(#f6f6f4, #e0e0de); }
.ttools .ti { width: 13px; height: 12px; }
.tree-box { height: 226px; flex: none; display: flex; flex-direction: column; background: #fff; margin: 2px 2px 0; border: 1px solid #aaa; border-bottom-color: #777; }
.tree-main { flex: 1; min-height: 0; display: flex; }
.tree-list { flex: 1; min-width: 0; overflow: hidden; padding: 2px 0 0 4px; }
.tr { height: 13.330px; display: flex; align-items: center; color: #444; white-space: nowrap; padding-left: 15px; }
.tr0 { padding-left: 0; }
.tr span { margin-left: 2px; padding: 0 1px; }
.tic { width: 11px; height: 11px; flex: none; margin-right: 1px; }
.ex.exa { margin-left: -11px; margin-right: 3px; }
.sel { background: #d8d8d6; }
.vscroll { width: 12px; flex: none; display: flex; flex-direction: column; background: #c9c9c7; }
.va { height: 10px; background: #f0f0ee; position: relative; flex: none; }
.va::after { content: ""; position: absolute; left: 3px; top: 3px; border: 3px solid transparent; border-bottom-color: #222; border-top-width: 0; }
.vthumb { height: 145px; background: #cfcfcd; border-bottom: 1px solid #777; border-right: 1px solid #777; flex: none; }
.tree-hs { height: 11px; flex: none; display: flex; background: #c9c9c7; align-items: center; padding-left: 1px; }
.ths-thumb { width: 40px; height: 10px; background: #cfcfcd; border-left: 1px solid #f4f4f2; }
.tree-rest { flex: 1; }
.tree-tabs { height: 14px; flex: none; padding-left: 2px; }
.design-tab { display: block; width: 29px; height: 12px; background: #eeeeea; line-height: 12px; text-align: center; }
.viewport { flex: 1; min-width: 0; }
.model { display: block; width: 100%; height: 100%; }
.axt { font-size: 8px; font-family: "Liberation Sans", sans-serif; }
.axy { fill: #6fc9a0; }
.axx { fill: #cc7a88; }

/* Edge dialog */
.edge-dialog {
  position: absolute; left: 47px; top: 210px; width: 98px; height: 163px;
  background: #c4c4c2; border: 2px solid #8c8c8a; display: flex; flex-direction: column;
  box-shadow: 1px 1px 0 #777;
}
.ed-title { height: 17px; flex: none; display: flex; justify-content: flex-end; align-items: center; padding-right: 3px; }
.ed-x { width: 11px; height: 11px; }
.ed-list { flex: 1; background: #fff; border: 1px solid #777; border-left: 0; }
.ed-row { height: 10.500px; line-height: 10px; border-bottom: 1px solid #d8d8d6; color: #444; }

/* Property manager */
.pm { height: 46px; flex: none; display: flex; background: #dededa; }
.pm-left { width: 33px; flex: none; display: grid; grid-template-columns: 14px 14px; gap: 2px 2px; align-content: start; padding: 5px 0 0 3px; background: #f0f0ee; }
.pi { width: 12px; height: 12px; }
.pm-right { flex: 1; min-width: 0; display: flex; flex-direction: column; }
.pm-field { height: 24px; margin-top: 4px; margin-right: 2px; flex: none; display: flex; align-items: center; padding-left: 12px; border: 1px solid #999; background: linear-gradient(#f4f4f2, #d4d4d2); color: #444; }
.pm-btn { width: 71px; height: 18px; line-height: 17px; padding-left: 4px; background: #dcdcda; border: 1px solid #aaa; flex: none; }
.checkbox { width: 10px; height: 10px; background: #ddd; border: 1px solid #555; margin: 0 1px 0 2px; flex: none; }
.pm-tabs { flex: 1; display: flex; align-items: center; background: linear-gradient(#f2f2f0, #cececc); }
.ptab { display: flex; align-items: center; height: 14px; padding: 0 2px; }
.ptab.act { background: #fafafa; width: 44px; }
.ptab.dim { padding-left: 3px; gap: 2px; }
.dim { color: #999; }

/* Library */
.lib { flex: 1; min-height: 0; display: flex; flex-direction: column; }
.pt-lib { height: 17px; padding-top: 2px; }
.lib-boxes { height: 42px; flex: none; display: flex; gap: 3px; padding-right: 1px; color: #444; }
.lib-tree { width: 202px; flex: none; background: #fff; border: 1px solid #777; padding: 2px 0 0 3px; }
.lt { display: flex; align-items: center; height: 11px; gap: 3px; }
.lt2 { padding-left: 16px; }
.lib-list { flex: 1; background: #fff; border: 1px solid #777; display: flex; padding: 2px 0 0 1px; }
.ll-col { width: 130px; }
.ll { display: flex; align-items: center; height: 11px; }
.sq { width: 11px; height: 11px; border: 1px solid #e6e6e4; margin-right: 3px; flex: none; }
.lib-tabs { height: 16px; flex: none; display: flex; align-items: center; margin-top: 1px; background: linear-gradient(#f2f2f0, #cececc); padding-left: 1px; }
.ltab { display: flex; align-items: center; height: 15px; padding: 0 0 0 1px; border-right: 1px solid #aaa; flex: none; white-space: nowrap; }
.l-a { width: 73px; }
.l-b { width: 81px; }
.l-c { width: 107px; }
.l-d { width: 67px; }
.ltab.act { background: #fafafa; color: #333; }

/* Status */
.status { height: 13px; flex: none; display: flex; align-items: center; padding-left: 1px; color: #444; background: #e0e0dc; border-top: 1px solid #aaa; border-bottom: 1px solid #999; }
.st-cell { margin-left: auto; width: 57px; height: 100%; border-left: 2px solid #999; }

/* Taskbar */
.taskbar { height: 18px; flex: none; display: flex; align-items: center; gap: 3px; background: #d4d4d2; padding: 0 2px 0 0; color: #333; }
.start { width: 34px; height: 15px; display: flex; align-items: center; font-weight: 700; background: #dedede; border: 1px solid #888; padding-left: 1px; }
.task { width: 105px; height: 15px; display: flex; align-items: center; gap: 1px; padding-left: 2px; background: #dcdcda; border: 1px solid #8c8c8a; white-space: nowrap; overflow: hidden; }
.task-act { font-weight: 700; background: #ececea; font-size: 7px; }
.tray { margin-left: auto; width: 74px; height: 16px; display: flex; align-items: center; gap: 1px; padding-left: 3px; background: #d8d8d6; border: 1px solid #bbb; color: #555; }
.tray-l { margin-right: 2px; }
.clock { margin-left: 4px; }
```
